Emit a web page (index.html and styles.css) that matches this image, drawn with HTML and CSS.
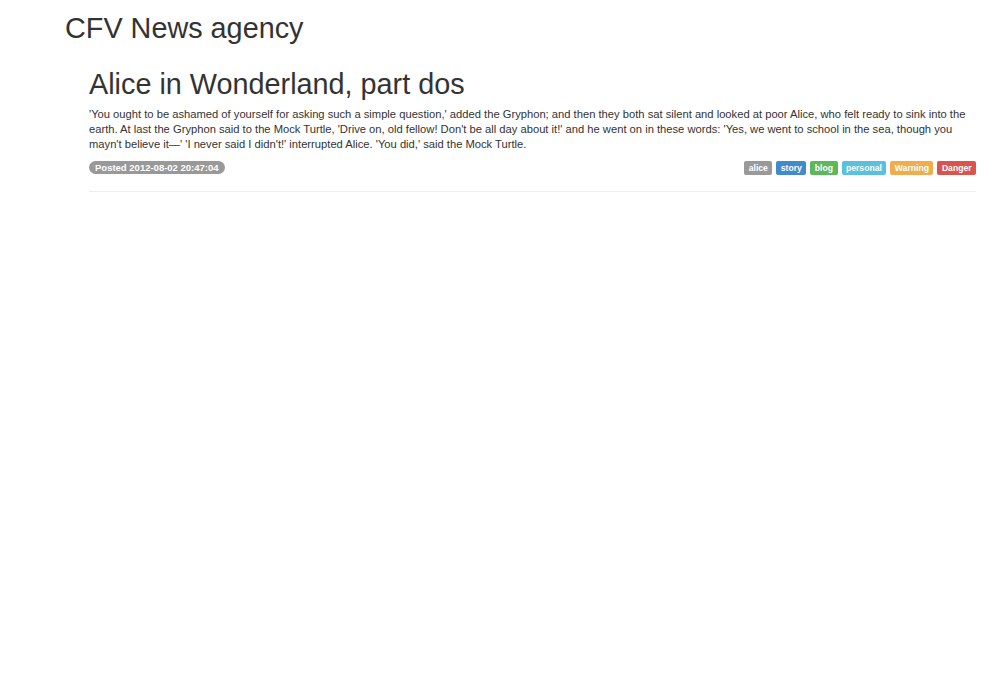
FILE: index.html
```html
<!DOCTYPE html>
<html>
<head>
<meta charset="utf-8">
<link rel="stylesheet" href="styles.css">
</head>
<body>
<div class="page">
  <h1 class="brand">CFV News agency</h1>
  <div class="post">
    <h2 class="post-title">Alice in Wonderland, part dos</h2>
    <p class="post-body">'You ought to be ashamed of yourself for asking such a simple question,' added the Gryphon; and then they both sat silent and looked at poor Alice, who felt ready to sink into the earth. At last the Gryphon said to the Mock Turtle, 'Drive on, old fellow! Don't be all day about it!' and he went on in these words: 'Yes, we went to school in the sea, though you mayn't believe it—' 'I never said I didn't!' interrupted Alice. 'You did,' said the Mock Turtle.</p>
    <div class="post-meta">
      <span class="badge">Posted 2012-08-02 20:47:04</span>
      <div class="tags">
        <span class="label label-default">alice</span>
        <span class="label label-primary">story</span>
        <span class="label label-success">blog</span>
        <span class="label label-info">personal</span>
        <span class="label label-warning">Warning</span>
        <span class="label label-danger">Danger</span>
      </div>
    </div>
    <hr class="divider">
  </div>
</div>
</body>
</html>
```

FILE: styles.css
```css
html, body {
  margin: 0;
  padding: 0;
  background: #fff;
}
body {
  font-family: "Liberation Sans", Arial, sans-serif;
  color: #333;
}
.page {
  padding: 0 28px 0 65px;
}
.brand {
  margin: 0;
  padding-top: 10px;
  font-size: 28.8px;
  font-weight: normal;
  line-height: 36px;
}
.post {
  padding-left: 24px;
  padding-top: 20px;
}
.post-title {
  margin: 0;
  font-size: 28.8px;
  font-weight: normal;
  line-height: 36px;
}
.post-body {
  margin: 5px 0 0;
  font-size: 11.2px;
  line-height: 15px;
}
.post-meta {
  display: flex;
  justify-content: space-between;
  align-items: flex-start;
  margin-top: 9px;
}
.badge {
  display: inline-block;
  background: #999;
  color: #fff;
  font-size: 9.5px;
  font-weight: bold;
  line-height: 13px;
  padding: 0 6px;
  border-radius: 7px;
}
.tags {
  display: flex;
  gap: 4px;
}
.label {
  display: inline-block;
  color: #fff;
  font-size: 8.6px;
  font-weight: bold;
  line-height: 14px;
  padding: 0 4.5px;
  border-radius: 2px;
}
.label-default { background: #999; }
.label-primary { background: #428bca; }
.label-success { background: #5cb85c; }
.label-info { background: #5bc0de; }
.label-warning { background: #f0ad4e; }
.label-danger { background: #d9534f; }
.divider {
  border: 0;
  border-top: 1px solid #eee;
  margin: 16px 0 0;
}
```
